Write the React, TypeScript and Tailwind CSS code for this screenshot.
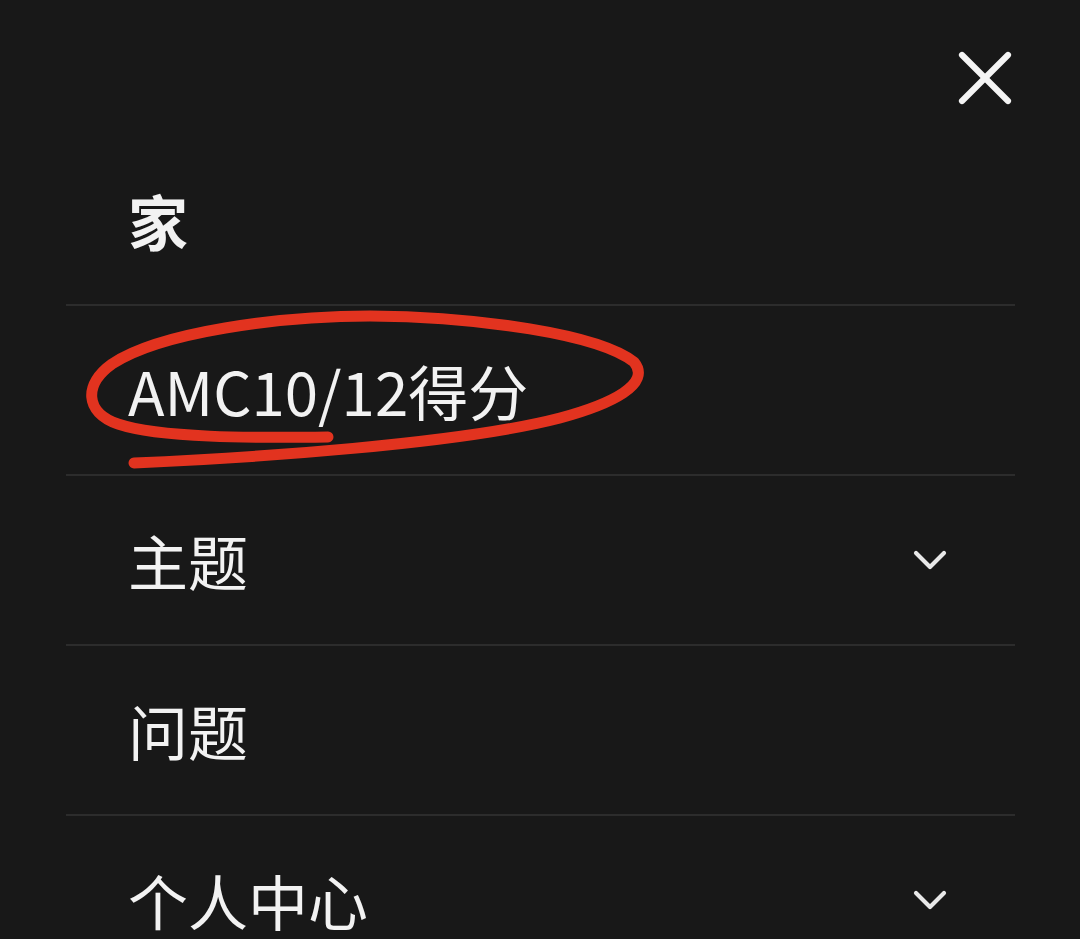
import { ChevronDown, X } from 'lucide-react';

type Item = { label: string; bold?: boolean; expandable?: boolean };

const ITEMS: Item[] = [
  { label: '家', bold: true },
  { label: 'AMC10/12得分' },
  { label: '主题', expandable: true },
  { label: '问题' },
  { label: '个人中心', expandable: true },
];

function Scribble() {
  // red hand-drawn ellipse round the second item
  return (
    <svg
      className="pointer-events-none absolute left-0 top-0"
      width={1080}
      height={939}
      viewBox="0 0 1080 939"
      fill="none"
    >
      <path
        d="M328 437 C 250 438, 160 438, 118 424 C 84 412, 84 384, 112 364 C 160 332, 280 316, 370 316 C 480 317, 598 334, 634 362 C 652 384, 612 404, 560 418 C 460 444, 250 458, 134 463"
        stroke="#e2331f"
        strokeWidth={11}
        strokeLinecap="round"
        strokeLinejoin="round"
      />
    </svg>
  );
}

export default function App() {
  return (
    <div
      className="relative h-[939px] w-[1080px] overflow-hidden bg-[#181818] text-[#f2f2f2]"
      style={{ fontFamily: '"Noto Sans CJK SC", "Noto Sans", sans-serif' }}
    >
      <div className="flex justify-end pr-[49px] pt-[32px] mb-[12px]">
        <X size={92} strokeWidth={1.6} className="text-[#f4f4f4]" />
      </div>
      <ul className="ml-[66px] w-[949px]">
        {ITEMS.map((it) => (
          <li
            key={it.label}
            className="flex h-[170px] items-center justify-between border-b-2 border-[#2c2c2c] pl-[62px] pr-[57px]"
          >
            <span className={`text-[60px] leading-none ${it.bold ? 'font-bold' : 'font-normal'}`}>
              {it.label}
            </span>
            {it.expandable && <ChevronDown size={56} strokeWidth={1.8} className="text-[#e8e8e8]" />}
          </li>
        ))}
      </ul>
      <Scribble />
    </div>
  );
}
